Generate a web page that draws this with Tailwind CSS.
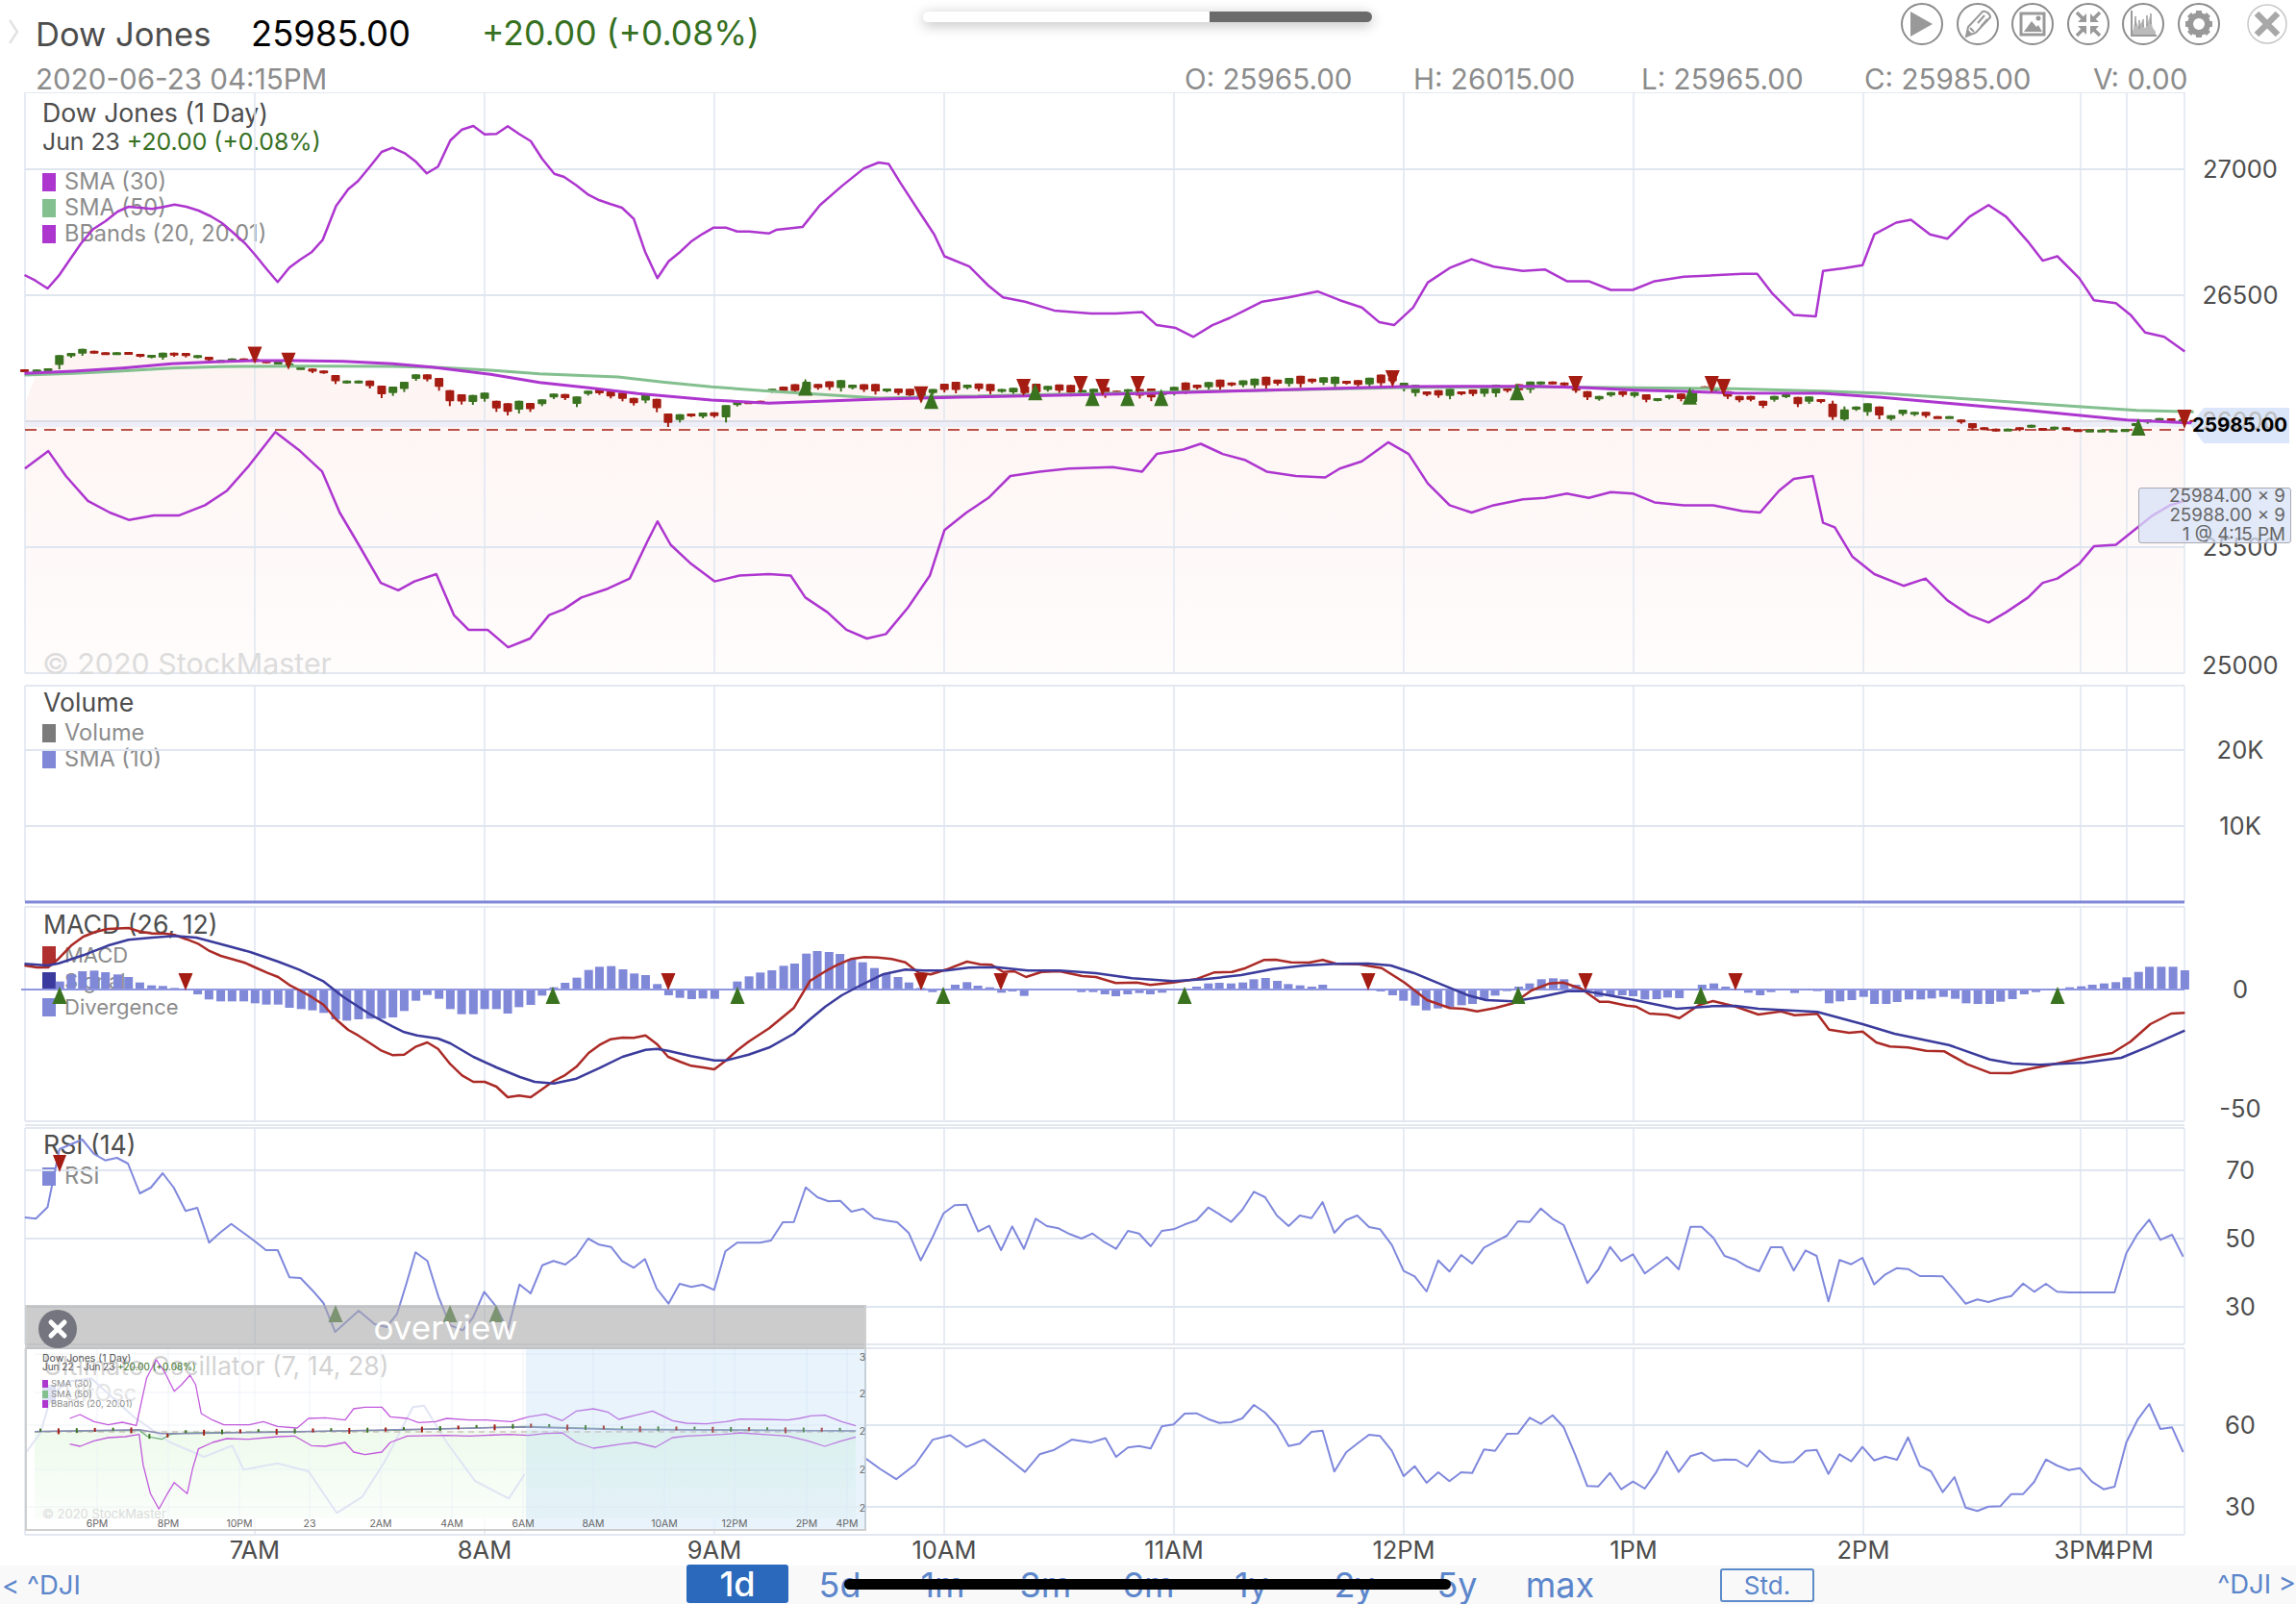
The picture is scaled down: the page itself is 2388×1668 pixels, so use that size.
<!DOCTYPE html>
<html lang="en">

<head>
  <meta charset="UTF-8">
  <title>Dow Jones chart</title>
  <script src="https://cdn.jsdelivr.net/npm/@tailwindcss/browser@4"></script>
</head>

<body class="relative w-[2388px] h-[1668px] overflow-hidden bg-white [font-family:Inter,sans-serif]">
  <!-- header -->
  <div class="flex h-[64px] items-start">
    <svg class="mt-[20px] ml-[9px] mr-[17px]" width="11" height="26" viewBox="0 0 11 26"><path d="M1 1 L9 13 L1 25" fill="none" stroke="#e2e2e2" stroke-width="2.5"/></svg>
    <span class="mt-[15px] w-[224px] text-[34.6px] leading-[40px] text-[#4d4d4d]">Dow Jones</span>
    <span class="mt-[15px] w-[240px] text-[36.4px] leading-[40px] text-black">25985.00</span>
    <span class="mt-[15px] text-[35.5px] leading-[40px] text-[#36701f]">+20.00 (+0.08%)</span>

    <div class="ml-auto mt-[3px] mr-[9px] flex items-center">
      <div class="flex gap-[13.6px]">
        <svg width="44" height="44" viewBox="0 0 44 44"><circle cx="22" cy="22" r="21" fill="#fff" stroke="#8c8c8c" stroke-width="2"/><path d="M10 9 L33 22 L10 35 Z" fill="#999"/></svg>
        <svg width="44" height="44" viewBox="0 0 44 44"><circle cx="22" cy="22" r="21" fill="#fff" stroke="#8c8c8c" stroke-width="2"/><path d="M10 35 L12 25 L27 9 C30 8 35 11 35 15 L20 31 Z M14 26 L18 30 M22 21 L29 13 M25 25 L32 17" fill="none" stroke="#999" stroke-width="2"/><path d="M10 35 L12 28 L16 32 Z" fill="#999"/></svg>
        <svg width="44" height="44" viewBox="0 0 44 44"><circle cx="22" cy="22" r="21" fill="#fff" stroke="#8c8c8c" stroke-width="2"/><rect x="10" y="11" width="24" height="22" fill="none" stroke="#999" stroke-width="3"/><path d="M13 30 L21 19 L26 25 L28 23 L32 30 Z" fill="#999"/><circle cx="28" cy="16" r="2.5" fill="#999"/></svg>
        <svg width="44" height="44" viewBox="0 0 44 44"><circle cx="22" cy="22" r="21" fill="#fff" stroke="#8c8c8c" stroke-width="2"/><path d="M10 10 L18 18 M34 10 L26 18 M10 34 L18 26 M34 34 L26 26" stroke="#999" stroke-width="3.5"/><path d="M20 20 L20 11 L11 20 Z M24 20 L24 11 L33 20 Z M20 24 L20 33 L11 24 Z M24 24 L24 33 L33 24 Z" fill="#999"/></svg>
        <svg width="44" height="44" viewBox="0 0 44 44"><circle cx="22" cy="22" r="21" fill="#fff" stroke="#8c8c8c" stroke-width="2"/><path d="M10 8 L10 34 L36 34" fill="none" stroke="#999" stroke-width="2"/><path d="M11 30 L14 17 L17 25 L21 19 L24 27 L29 14 L32 26 L35 30 L35 33 L11 33 Z" fill="#bbb"/><path d="M14 14 L14 24 M18 18 L18 27 M22 17 L22 25 M26 13 L26 24 M30 11 L30 22" stroke="#999" stroke-width="1.5"/></svg>
        <svg width="44" height="44" viewBox="0 0 44 44"><circle cx="22" cy="22" r="21" fill="#fff" stroke="#8c8c8c" stroke-width="2"/><circle cx="22" cy="22" r="9" fill="none" stroke="#999" stroke-width="6"/><path d="M19 8 h6 v5 h-6 Z M19 31 h6 v5 h-6 Z M8 19 h5 v6 h-5 Z M31 19 h5 v6 h-5 Z M10 14 l4 -4 l4 4 l-4 4 Z M26 14 l4 -4 l4 4 l-4 4 Z M10 30 l4 -4 l4 4 l-4 4 Z M26 30 l4 -4 l4 4 l-4 4 Z" fill="#999"/></svg>
      </div>
      <svg class="ml-[28px]" width="42" height="42" viewBox="0 0 42 42"><circle cx="21" cy="21" r="20" fill="#fff" stroke="#c8c8c8" stroke-width="1.5"/><path d="M10 10 L32 32 M32 10 L10 32" stroke="#a8a8a8" stroke-width="6.5"/></svg>
    </div>
  </div>
  <div class="flex h-[32px] items-center text-[29.6px] text-[#8c8c8c] pt-[4px]">
    <span class="ml-[37px] w-[1195px] text-[#8c8c8c]">2020-06-23 04:15PM</span>
    <span class="w-[238px]">O: 25965.00</span>
    <span class="w-[237px]">H: 26015.00</span>
    <span class="w-[232px]">L: 25965.00</span>
    <span class="w-[238px]">C: 25985.00</span>
    <span>V: 0.00</span>
  </div>

  <!-- floating page indicator -->
  <div class="absolute left-[960px] top-[12px] flex h-[11px] w-[467px] overflow-hidden rounded-full shadow-[0_3px_14px_rgba(0,0,0,0.28)]">
    <div class="w-[298px] bg-white"></div>
    <div class="flex-1 bg-[#6b6b6b]"></div>
  </div>

  <!-- chart -->
  <div class="relative h-[1532px] w-full">
    <div class="absolute left-[44px] top-[6px] text-[26.7px] leading-[30px] text-[#4d4d4d]">
      <div>Dow Jones (1 Day)</div>
      <div class="text-[24.8px]">Jun 23 <span class="text-[#36701f]">+20.00 (+0.08%)</span></div>
    </div>
    <div class="absolute left-[44px] top-[82px] flex flex-col gap-[5px] text-[23.6px] leading-[22px] text-[#8c8c8c]">
      <div class="flex items-center gap-[9px]"><i class="h-[19px] w-[14px] bg-[#ad36cf]"></i>SMA (30)</div>
      <div class="flex items-center gap-[9px]"><i class="h-[19px] w-[14px] bg-[#83bf8f]"></i>SMA (50)</div>
      <div class="flex items-center gap-[9px]"><i class="h-[19px] w-[14px] bg-[#ad36cf]"></i>BBands (20, 20.01)</div>
    </div>
    <div class="absolute left-[44px] top-[619px] text-[26.7px] leading-[30px] text-[#4d4d4d]">
      <div class="pl-[1px]">Volume</div>
      <div class="mt-[6px] flex flex-col gap-[5px] text-[23.6px] leading-[22px] text-[#8c8c8c]">
        <div class="flex items-center gap-[9px]"><i class="h-[19px] w-[14px] bg-[#7b7b7b]"></i>Volume</div>
        <div class="flex items-center gap-[9px]"><i class="h-[19px] w-[14px] bg-[#8088d8]"></i>SMA (10)</div>
      </div>
    </div>
    <div class="absolute left-[44px] top-[850px] text-[26.7px] leading-[30px] text-[#4d4d4d]">
      <div class="pl-[1px]">MACD (26, 12)</div>
      <div class="mt-[6px] flex flex-col gap-[5px] text-[22px] leading-[22px] text-[#8c8c8c]">
        <div class="flex items-center gap-[9px]"><i class="h-[19px] w-[14px] bg-[#b03030]"></i>MACD</div>
        <div class="flex items-center gap-[9px]"><i class="h-[19px] w-[14px] bg-[#3b3b9f]"></i>Signal</div>
        <div class="flex items-center gap-[9px]"><i class="h-[19px] w-[14px] bg-[#8088d8]"></i>Divergence</div>
      </div>
    </div>
    <div class="absolute left-[44px] top-[1079px] text-[26.7px] leading-[30px] text-[#4d4d4d]">
      <div class="pl-[1px]">RSI (14)</div>
      <div class="mt-[7px] flex items-center gap-[9px] text-[23.6px] leading-[22px] text-[#8c8c8c]"><i class="h-[19px] w-[14px] bg-[#8088d8]"></i>RSI</div>
    </div>
    <div class="absolute left-[44px] top-[1309px] text-[26.7px] leading-[30px] text-[#4d4d4d]">
      <div class="pl-[1px]">Ultimate Oscillator (7, 14, 28)</div>
      <div class="mt-[3px] flex items-center gap-[9px] text-[23.6px] leading-[22px] text-[#8c8c8c]"><i class="h-[19px] w-[14px] bg-[#8088d8]"></i>UltOsc</div>
    </div>

    <svg id="chart" class="absolute inset-0" width="2388" height="1532" viewBox="0 96 2388 1532"></svg>

    <div class="absolute left-[44px] top-[576px] text-[30.4px] leading-[36px] text-[#dcdcdc]">© 2020 StockMaster</div>

    <!-- last trade box -->
    <div class="absolute left-[2224px] top-[411px] flex h-[58px] w-[159px] flex-col items-end justify-center rounded-[3px] border border-[#a9a9b2] bg-[#d8e2f7]/75 pr-[5px] text-[18.8px] leading-[20px] text-[#666]">
      <div>25984.00 × 9</div>
      <div>25988.00 × 9</div>
      <div>1 @ 4:15 PM</div>
    </div>

    <!-- overview -->
    <div class="absolute left-[26px] top-[1261px] h-[235px] w-[875px] border-x-2 border-b-2 border-[#cfcfcf]">
      <div class="relative flex h-[46px] items-center justify-center bg-[#aaaaaa]/60 text-[35px] text-white">
        <svg class="absolute left-[12px] top-[5px]" width="40" height="40" viewBox="0 0 40 40"><circle cx="20" cy="20" r="20" fill="#75757f"/><path d="M13 13 L27 27 M27 13 L13 27" stroke="#fff" stroke-width="5" stroke-linecap="round"/></svg>
        <span>overview</span>
      </div>
      <div class="relative h-[187px] bg-white/75">
        <svg id="mini" class="absolute inset-0" width="873" height="187" viewBox="27 1403 873 187"></svg>
        <div class="absolute left-[16px] top-[5px] text-[10.5px] leading-[9px] text-[#555]">
          <div>Dow Jones (1 Day)</div>
          <div class="text-[10px]">Jun 22 - Jun 23 <span class="text-[#36701f]">+20.00 (+0.08%)</span></div>
          <div class="mt-[8px] flex flex-col gap-[0.5px] text-[9.5px] leading-[10px] text-[#8c8c8c]">
            <div class="flex items-center gap-[3px]"><i class="h-[8px] w-[6px] bg-[#ad36cf]"></i>SMA (30)</div>
            <div class="flex items-center gap-[3px]"><i class="h-[8px] w-[6px] bg-[#83bf8f]"></i>SMA (50)</div>
            <div class="flex items-center gap-[3px]"><i class="h-[8px] w-[6px] bg-[#ad36cf]"></i>BBands (20, 20.01)</div>
          </div>
        </div>
        <div class="absolute left-[16px] top-[163px] text-[13px] leading-[16px] text-[#dcdcdc]">© 2020 StockMaster</div>
      </div>
    </div>
  </div>

  <!-- range bar -->
  <div class="flex h-[40px] items-center bg-[#f9f9f9] text-[36px] text-[#5c86cb]">
    <span class="w-[714px] pl-[2px] text-[27.5px] leading-[40px]">&lt; ^DJI</span>
    <span class="-mt-[2px] flex h-[40px] w-[106px] items-center justify-center rounded-[3px] bg-[#2b69bc] font-medium text-white">1d</span>
    <span class="w-[107px] text-center">5d</span>
    <span class="w-[107px] text-center">1m</span>
    <span class="w-[107px] text-center">3m</span>
    <span class="w-[107px] text-center">6m</span>
    <span class="w-[107px] text-center">1y</span>
    <span class="w-[107px] text-center">2y</span>
    <span class="w-[107px] text-center">5y</span>
    <span class="w-[107px] text-center">max</span>
    <span class="ml-[113px] flex h-[35px] w-[98px] items-center justify-center rounded-[3px] border-2 border-[#5c8bc9] text-[26px]">Std.</span>
    <span class="ml-auto text-[27.5px]">^DJI &gt;</span>
  </div>

  <!-- home indicator -->
  <div class="absolute left-[878px] top-[1642px] h-[11px] w-[631px] rounded-full bg-black"></div>

  <script>
    const L = 26, R = 2272;
    const GRID = "#dfe6f0", PURPLE = "#ad36cf", GREEN = "#83bf8f", BLUE = "#7f88dc", DRED = "#a51c12", DGREEN = "#3a7320";

    // traced from the screenshot: flat x,y lists, each with its own crop origin + scale
    const pts = (a, ox = 0, oy = 0, sx = 1, sy = 1) => {
      let out = [];
      for (let i = 0; i < a.length; i += 2) out.push([ox + a[i] / sx, oy + a[i + 1] / sy]);
      return out;
    };
    const S = 2388 / 1568;
    const line = (p, color, w = 2.5, extra = "") =>
      `<polyline points="${p.map(q => q[0].toFixed(1) + "," + q[1].toFixed(1)).join(" ")}" fill="none" stroke="${color}" stroke-width="${w}" stroke-linejoin="round" ${extra}/>`;
    const hl = (y, c = GRID, w = 2, x1 = L, x2 = R) => `<line x1="${x1}" x2="${x2}" y1="${y}" y2="${y}" stroke="${c}" stroke-width="${w}"/>`;
    const vl = (x, y1, y2, c = GRID, w = 1.5) => `<line x1="${x}" x2="${x}" y1="${y1}" y2="${y2}" stroke="${c}" stroke-width="${w}"/>`;
    const down = (x, y, w = 15, h = 18) => `<path d="M${x - w / 2} ${y} h${w} l-${w / 2} ${h} Z" fill="${DRED}"/>`;
    const up = (x, y, w = 15, h = 18) => `<path d="M${x - w / 2} ${y} h${w} l-${w / 2} -${h} Z" fill="${DGREEN}"/>`;
    const label = (x, y, t, anchor = "middle") => `<text x="${x}" y="${y}" dy="0.36em" text-anchor="${anchor}" font-size="25.5" fill="#4d4d4d">${t}</text>`;

    const panels = [[96, 700], [713, 938], [943, 1166], [1173, 1398], [1402, 1596]];
    const hours = [265, 504, 743, 982, 1221, 1460, 1699, 1938, 2164, 2212];
    const hourNames = ["7AM", "8AM", "9AM", "10AM", "11AM", "12PM", "1PM", "2PM", "3PM", "4PM"];

    // ---- main panel
    const upper = pts([50,858,72,875,97,900,120,860,140,815,165,760,190,715,215,690,240,660,262,645,285,648,310,652,335,645,356,638,380,645,405,657,430,675,452,695,475,725,500,760,520,795,545,842,566,880,590,835,612,810,635,787,658,748,685,643,710,590,730,565,755,518,778,474,800,461,825,478,848,505,870,541,893,520,918,438,942,404,965,393,988,419,1012,418,1035,394,1058,418,1082,440,1105,495,1130,542,1150,552,1175,578,1200,608,1222,625,1245,637,1268,648,1292,683,1315,785,1340,868,1363,815,1387,785,1410,752,1432,730,1455,710,1480,710,1503,722,1527,722,1568,728], 0, 0, 1.96, 3)
      .concat(pts([530,157,548,155,560,140,575,127,590,115,600,111,607,112,615,125,628,145,638,160,645,175,662,182,675,195,685,203,700,206,720,212,745,214,762,214,780,213,790,222,803,224,815,230,828,222,840,217,850,212,862,206,880,203,900,199,915,205,930,210,942,220,952,222,965,210,975,193,990,183,1005,177,1020,182,1040,185,1055,184,1070,192,1085,192,1100,198,1115,198,1130,192,1150,189,1170,188,1190,187,1200,187,1210,200,1225,215,1240,216,1245,185,1260,183,1272,181,1280,160,1295,152,1305,150,1318,160,1330,163,1345,148,1358,140,1370,148,1385,165,1395,178,1405,175,1420,190,1430,205,1445,207,1455,215,1465,227,1478,230,1492,240], 0, 0, 1 / S, 1 / S));
    const lower = pts([17,320,33,308,45,325,60,342,75,350,88,355,105,352,122,352,140,345,155,335,170,318,188,295,205,308,220,322,232,350,245,372,260,398,272,403,283,397,298,392,310,420,320,430,333,430,347,442,362,436,375,420,385,416,397,408,415,402,430,395,442,370,449,356,458,372,472,385,488,397,505,393,525,392,540,393,550,408,565,418,578,430,592,436,605,433,620,415,635,393,645,362,660,350,675,340,690,325,710,322,730,320,760,319,780,322,790,310,808,307,820,303,835,310,850,314,865,322,885,325,905,326,915,320,930,315,948,302,962,310,975,330,990,345,1005,350,1020,345,1040,341,1055,340,1070,337,1085,340,1100,336,1115,337,1130,343,1150,345,1170,345,1190,349,1202,350,1215,335,1225,327,1238,325,1245,357,1253,360,1265,380,1280,392,1300,400,1315,395,1330,410,1345,420,1358,425,1370,418,1385,408,1395,398,1405,395,1420,385,1430,373,1445,372,1460,360,1470,352,1482,345,1492,342], 0, 0, 1 / S, 1 / S);

    const smaP = pts([50,205,150,198,250,188,350,175,450,168,520,165,600,165,700,167,800,175,880,185,1000,208,1100,233,1200,250,1300,268,1450,288,1568,298], 0, 320, 1.96, 3)
      .concat([[914, 415], [1000, 413], [1200, 409], [1460, 402]], pts([0,125,100,130,200,137,300,141,400,146,580,147,700,160,850,180,1000,200,1200,230,1336,240], 1600, 360, 1.96, 3));
    const smaG = pts([50,210,150,205,250,197,350,188,450,184,520,183,640,182,800,183,900,187,1000,195,1100,206,1260,216,1350,232,1450,247,1568,260], 0, 320, 1.96, 3)
      .concat([[914, 414], [1000, 412], [1200, 408], [1460, 403]], pts([0,127,200,130,400,133,580,140,700,147,900,167,1100,188,1220,200,1336,205], 1600, 360, 1.96, 3));

    // candles: x, high, low, green?
    let candles = [];
    const left = [50,192,198,0,75,193,200,1,98,189,197,1,121,148,192,1,145,141,156,1,168,128,150,1,192,134,143,0,215,139,146,0,238,139,146,1,262,138,146,0,286,144,155,0,309,147,158,1,332,140,162,1,355,140,153,0,379,141,155,0,403,148,158,1,426,153,168,0,450,163,169,1,473,158,168,1,497,158,166,0,520,160,170,0,543,164,174,0,567,168,176,1,590,174,182,1,613,185,192,1,637,190,204,0,660,196,206,0,684,210,238,0,707,227,237,1,731,227,236,1,754,227,252,0,778,243,282,0,801,246,275,1,824,231,263,1,848,208,228,1,871,208,230,0,895,219,259,0,917,257,307,0,941,270,302,0,964,272,303,1,988,265,293,1,1012,290,325,0,1035,298,336,0,1058,290,330,1,1081,297,325,0,1105,286,307,1,1129,268,285,1,1152,269,288,0,1176,277,310,1,1199,259,274,1,1222,255,272,0,1245,261,283,0,1269,265,292,0,1292,281,305,0,1316,270,298,1,1339,284,326,0,1362,330,372,0,1386,332,358,1,1409,330,341,0,1433,327,345,1,1456,326,343,0,1480,304,358,1,1503,294,308,1,1526,292,298,0,1550,290,297,0];
    for (let i = 0; i < left.length; i += 4) candles.push([left[i] / 1.96, 320 + left[i + 1] / 3, 320 + left[i + 2] / 3, left[i + 3]]);
    const mid = [[525,267],[550,265],[570,263],[590,265],[610,267],[630,270],[645,265],[665,264],[685,267],[700,267],[720,265],[740,268],[770,268],[790,270],[810,265],[830,263],[850,262],[880,261],[900,260],[930,262],[950,259],[960,265],[975,269],[990,269],[1010,268],[1030,266],[1050,264]].map(p => [p[0] * S, p[1] * S]);
    const at = (path, x) => {
      for (let i = 1; i < path.length; i++) if (x <= path[i][0]) {
        const [a, b] = [path[i - 1], path[i]];
        return a[1] + (b[1] - a[1]) * (x - a[0]) / (b[0] - a[0]);
      }
      return path[path.length - 1][1];
    };
    for (let x = 803, i = 0; x < 1600; x += 11.95, i++) {
      const y = at(mid, x), h = 4 + (i * 13) % 10;
      candles.push([x, y - h / 2, y + h / 2, (i * 5) % 7 < 3 ? 1 : 0]);
    }
    const right = [5,110,122,1,29,110,118,0,53,113,123,0,77,125,145,0,100,140,168,0,124,155,170,1,148,143,158,1,172,140,158,0,196,143,160,1,220,150,175,0,243,162,172,1,267,152,166,1,291,148,172,0,315,130,180,1,339,125,133,0,362,130,142,1,386,140,165,0,410,155,175,0,433,155,172,0,458,170,193,0,481,155,173,1,505,150,162,1,529,158,190,0,552,157,180,1,576,165,178,0,600,170,230,0,624,188,233,1,648,188,202,1,671,178,217,1,695,188,228,0,719,215,232,1,743,198,217,1,767,205,218,1,790,205,223,0,814,218,224,0,838,218,224,1,862,229,242,0,885,240,262,0,909,253,262,0,933,257,266,0,957,257,262,1,981,253,265,0,1005,245,255,1,1028,255,262,0,1052,251,260,1,1076,253,262,0,1100,259,264,0,1124,260,264,1,1148,260,264,1,1172,260,264,1,1196,259,264,1,1218,240,248,1,1242,228,242,1,1266,224,232,1,1290,225,235,0,1314,228,235,1,1336,230,245,0];
    for (let i = 0; i < right.length; i += 4) candles.push([1600 + right[i] / 1.96, 360 + right[i + 1] / 3, 360 + right[i + 2] / 3, right[i + 3]]);

    const candleSvg = c => {
      const range = c[2] - c[1], bh = Math.max(3, range * 0.7), col = c[3] ? DGREEN : DRED;
      const bt = range > 14 && c[0] % 2 < 1 ? c[1] + 3 : c[1];
      return `<rect x="${c[0] - 1}" y="${c[1]}" width="2" height="${range}" fill="${col}"/><rect x="${c[0] - 4.5}" y="${bt}" width="9" height="${bh}" rx="1" fill="${col}"/>`;
    };
    const area = [[L, 420]].concat(candles.filter(c => c[0] > L).map(c => [c[0], c[1] + 2]), [[R, 440], [R, 700], [L, 700]]);

    let g = `<defs><linearGradient id="pink" x1="0" y1="0" x2="0" y2="1"><stop offset="0" stop-color="#fdf4f2"/><stop offset="1" stop-color="#fffcfc"/></linearGradient></defs>`;
    g += `<polygon points="${area.map(p => p.join(",")).join(" ")}" fill="url(#pink)"/>`;

    for (const [t, b] of panels) {
      g += hl(t, "#e3e8f0") + hl(b, "#e3e8f0");
      g += vl(L, t, b) + vl(R, t, b);
      hours.forEach(x => g += vl(x, t, b));
    }
    [176, 307, 569].forEach(y => g += hl(y));
    g += hl(438, "#dcdce6") + `<rect x="${L}" y="439" width="${R - L}" height="5" fill="#eeeef9"/>`;
    [780, 859, 1217, 1288, 1359, 1482, 1567].forEach(y => g += hl(y));
    g += hl(938, "#8088d8", 3);
    g += hl(1170, "#e3e8f0");

    g += line(upper, PURPLE) + line(lower, PURPLE);
    g += hl(447, DRED, 1.5).replace("/>", ' stroke-dasharray="12 8"/>');
    candles.forEach(c => g += candleSvg(c));
    g += line(smaG, GREEN, 3) + line(smaP, PURPLE, 3);

    [174,197,629,699,738,753,777,951,1076,1169,1177].forEach((x, i) => g += down(x * S, [242,246,269,264,262,264,262,258,262,262,264][i] * S - 8));
    g += down(2272, 426, 15, 20);
    [550,636,707,746,770,793,1036,1154].forEach((x, i) => g += up(x * S, [265,274,268,272,272,272,268,271][i] * S + 8));
    g += up(2224, 453, 15, 18);

    // ---- macd
    [74,300,98,300,122,272,145,250,168,240,192,238,215,243,240,250,262,258,285,275,309,284,332,286,356,292,379,300,403,312,426,328,450,334,473,334,497,334,520,340,543,344,567,344,590,354,614,358,637,362,660,370,684,390,707,394,731,390,755,388,778,388,801,384,824,364,848,332,871,314,895,326,918,358,941,374,965,374,988,358,1012,358,1035,372,1058,352,1082,345,1105,316,1129,290,1152,276,1176,260,1200,236,1222,226,1246,224,1270,234,1293,247,1316,252,1340,280,1363,315,1386,323,1410,327,1433,325,1457,326,1480,297,1503,272,1527,256,1550,244].forEach((v, i, a) => {
      if (i % 2) return;
      const x = v / 1.96, y = 930 + a[i + 1] / 3;
      g += `<rect x="${x - 4.5}" y="${Math.min(y, 1029)}" width="9" height="${Math.abs(y - 1029)}" fill="#8088d8"/>`;
    });
    [3,207,16,193,28,186,41,155,53,147,66,150,78,156,91,172,103,182,116,200,129,218,142,228,154,245,167,262,180,275,205,252,218,244,230,255,243,260,256,277,268,273,281,287,294,270,306,266,319,265,332,268,344,275,357,275,370,282,382,288,395,282,408,278,420,282,433,277,445,268,458,265,471,258,484,248,496,246,509,248,522,245,534,235,547,231,560,240,572,250,585,254,598,258,610,252,623,265,636,265,648,265,661,265,674,273,687,285,699,302,712,317,724,332,737,326,750,322,763,316,775,312,788,300,800,286,813,272,826,258,838,248,851,235,864,232,876,235,889,252,902,270,914,290,927,287,940,285,952,288,965,298,978,297,990,292,1003,294,1016,265,1028,252,1041,248,1054,258,1067,265,1079,277,1092,285,1104,275,1117,266,1130,278,1142,270,1155,272,1168,310,1180,304,1193,300,1206,290,1218,312,1231,312,1243,306,1256,298,1269,298,1281,295,1294,290,1307,296,1319,310,1332,312,1345,312,1357,305,1370,297,1383,282,1396,275,1408,266,1420,265,1433,260,1446,257,1458,252,1471,248,1484,244,1496,229,1509,212,1521,196,1534,196,1547,196,1560,207].forEach((v, i, a) => {
      if (i % 2) return;
      const x = 800 + v / 1.0595, y = 940 + a[i + 1] / 3;
      g += `<rect x="${x - 4.5}" y="${Math.min(y, 1029)}" width="9" height="${Math.abs(y - 1029)}" fill="#8088d8"/>`;
    });
    g += hl(1029, "#8f96df", 2, 22, R);
    const macd = pts([50,222,75,228,98,228,120,200,145,160,170,132,195,117,220,108,262,105,285,116,310,122,335,122,356,127,380,140,405,155,425,175,450,192,498,213,520,228,545,245,567,258,590,283,612,300,635,320,660,345,685,390,710,423,730,440,755,465,778,488,801,502,824,500,848,475,871,462,893,482,918,530,942,565,965,585,988,585,1012,600,1035,633,1058,628,1082,633,1105,608,1129,582,1150,566,1175,538,1200,495,1222,470,1245,452,1269,447,1292,448,1316,440,1339,467,1362,507,1386,522,1409,535,1433,540,1456,546,1480,518,1503,487,1526,460,1568,418], 0, 930, 1.96, 3)
      .concat(pts([27,325,45,240,62,210,75,190,90,172,105,166,120,167,135,172,150,182,165,215,178,220,195,205,218,180,232,188,245,190,258,212,270,210,283,228,300,212,320,210,345,225,360,228,382,247,405,245,420,253,445,245,470,235,490,214,510,212,525,200,545,175,558,174,575,182,595,183,610,175,625,187,650,188,675,200,700,245,725,300,750,325,765,327,780,335,800,325,820,310,840,270,860,248,875,245,895,265,915,305,925,305,945,317,955,320,970,342,990,346,1003,356,1025,315,1040,303,1065,320,1090,345,1115,335,1130,347,1155,343,1168,392,1190,402,1205,398,1220,432,1235,445,1255,448,1275,458,1295,460,1320,500,1345,527,1368,528,1385,517,1420,497,1450,480,1480,465,1500,430,1522,375,1545,342,1560,340], 800, 940, 1.0595, 3));
    const signal = pts([50,217,98,222,120,215,170,190,220,160,262,142,310,135,356,130,400,135,450,155,510,180,567,210,610,235,660,272,700,320,755,375,800,412,824,430,850,440,893,450,918,465,965,507,1012,540,1060,570,1090,585,1129,590,1175,575,1222,542,1269,507,1316,485,1339,482,1362,488,1409,505,1456,518,1480,518,1526,500,1568,478], 0, 930, 1.96, 3)
      .concat(pts([27,405,45,360,62,320,80,285,100,255,125,220,150,205,170,208,195,208,220,199,250,197,285,208,320,208,360,216,400,232,445,241,480,235,520,222,555,203,590,192,625,187,660,186,685,192,710,215,740,250,770,285,790,300,820,304,850,290,880,272,900,272,950,298,1000,327,1040,319,1065,318,1090,327,1155,337,1205,375,1240,405,1300,440,1345,485,1370,498,1400,502,1450,495,1490,480,1520,445,1560,395], 800, 940, 1.0595, 3));
    g += line(macd, "#ab2a26", 2.5) + line(signal, "#3a3b9c", 2.5);
    [193, 695, 958, 1041, 1423, 1649, 1805].forEach(x => g += down(x, 1012));
    [62, 575, 767, 981, 1232, 1579, 1769, 2140].forEach(x => g += up(x, 1044));

    // ---- rsi + ultimate oscillator
    const rsi = pts([8,288,24,292,41,256,58,75,91,45,108,90,124,110,141,102,157,120,174,213,190,195,207,150,223,195,240,268,257,258,274,367,290,335,306,308,323,335,340,362,356,390,373,390,390,475,406,477,423,515,439,555,456,645,490,579,513,621,530,630,545,590,558,500,572,397,589,424,605,535,622,625,640,640,655,600,671,520,688,565,705,640,722,497,738,525,755,437,771,424,788,435,804,408,821,354,837,373,854,380,870,424,887,445,903,418,920,510,937,557,953,495,970,505,986,498,1003,514,1019,394,1036,367,1052,367,1069,367,1085,360,1102,303,1118,302,1135,194,1152,225,1168,238,1185,236,1201,270,1218,261,1234,290,1251,298,1267,303,1284,337,1301,422,1317,355,1334,275,1350,250,1367,248,1384,332,1400,314,1417,390,1433,316,1450,386,1467,292,1483,315,1500,322,1516,340,1533,354,1549,338,1566,365], 20, 1170, 1.3876, 3)
      .concat(pts([15,386,32,330,48,338,65,378,81,330,98,325,114,310,131,297,148,257,164,278,181,302,197,265,214,208,230,225,247,282,264,315,280,282,297,290,313,240,330,336,347,296,363,282,380,318,396,325,413,374,430,455,446,472,463,519,480,422,496,457,513,405,529,432,546,382,562,364,579,345,595,300,612,302,628,260,645,292,661,312,678,400,695,493,711,450,728,380,744,424,761,403,778,463,794,437,810,412,827,450,844,317,860,317,877,352,893,408,910,421,926,442,943,456,960,381,976,381,993,454,1010,391,1026,408,1043,550,1059,421,1076,434,1092,414,1109,497,1125,466,1142,446,1158,449,1175,471,1191,471,1208,472,1225,515,1241,557,1258,544,1274,552,1291,541,1307,533,1324,494,1340,520,1357,495,1373,520,1390,522,1406,522,1423,522,1440,522,1456,522,1473,400,1489,340,1506,295,1522,358,1539,342,1555,410], 1150, 1170, 1.3876, 3));
    const ult = pts([590,995,601,1003,612,1010,625,1000,637,983,649,980,660,988,672,983,685,993,700,1005,710,993,720,990,732,983,745,985,755,982], 0, 0, 1 / S, 1 / S)
      .concat(pts([15,1035,32,1006,48,1001,65,1009,81,940,98,934,114,900,131,899,148,917,164,929,181,927,197,915,214,873,230,897,247,937,264,1001,280,994,297,957,313,953,330,1081,347,1021,363,994,380,966,396,970,413,1016,430,1095,446,1064,463,1116,480,1083,496,1111,513,1083,529,1085,546,1012,562,1016,579,963,595,962,612,913,628,932,645,905,661,943,678,1030,695,1126,711,1127,728,1085,744,1136,761,1112,778,1134,794,1085,810,1018,827,1082,844,1033,860,1022,877,1047,893,1043,910,1044,926,1065,943,1015,960,1047,976,1053,993,1051,1010,1016,1026,1013,1043,1088,1059,1027,1076,1049,1092,1004,1109,1046,1125,1034,1142,1044,1158,974,1175,1063,1191,1080,1208,1145,1225,1098,1241,1193,1258,1204,1274,1190,1291,1189,1307,1151,1324,1151,1340,1113,1357,1043,1373,1062,1390,1076,1406,1070,1423,1112,1440,1136,1456,1128,1473,990,1489,920,1506,870,1522,948,1539,943,1555,1020], 1150, 1170, 1.3876, 3));
    g += line(rsi, BLUE, 2) + line(ult, BLUE, 2);
    g += down(62, 1201, 14, 18);
    [349, 468, 516].forEach(x => g += up(x, 1375));

    // ---- axis labels
    [[176,"27000"],[307,"26500"],[569,"25500"],[692,"25000"],[780,"20K"],[859,"10K"],[1029,"0"],[1153,"-50"],[1217,"70"],[1288,"50"],[1359,"30"],[1482,"60"],[1567,"30"]]
      .forEach(([y, t]) => g += label(2330, y, t));
    hours.forEach((x, i) => g += label(x, 1612, hourNames[i]));
    g += `<polygon points="2278,442 2292,424 2381,424 2381,461 2292,461" fill="#dbe6fa"/>`;
    g += `<text x="2330" y="438" dy="0.36em" text-anchor="middle" font-size="25.5" fill="#bbb">26000</text>`;
    g += `<text x="2280" y="442" dy="0.36em" font-size="20.5" font-weight="700" fill="#000">25985.00</text>`;
    document.getElementById("chart").innerHTML = g;

    // ---- overview mini chart (traced in a 1.704 x 3 crop with origin 0,1340)
    const z = a => pts(a, 0, 1340, 1.704, 3);
    let m = "";
    m += `<defs><linearGradient id="mg" x1="0" y1="0" x2="0" y2="1"><stop offset="0" stop-color="#eefbec"/><stop offset="1" stop-color="#fafefa"/></linearGradient></defs>`;
    m += `<rect x="35" y="1488" width="854" height="91" fill="url(#mg)"/>`;
    [100,174,248,321,395,469,543,616,690,763,838,880].forEach(x => m += vl(x, 1403, 1579, "#eef2f7", 1));
    [1408, 1448, 1488, 1528, 1567].forEach(y => m += hl(y, "#eef2f7", 1, 35, 890));
    m += line(z([45,510,70,450,90,330,120,290,160,280,235,400,300,480,360,525,410,490,430,565,490,545,545,570,595,700,640,650,680,540,730,370,750,365,790,480,840,600,900,655,928,580]), "#e0e4f4", 2);
    m += line(z([122,405,140,393,165,415,190,425,215,417,240,427,258,280,275,222,290,260,307,320,320,300,335,270,345,300,355,390,375,410,395,425,440,425,465,415,490,430,525,435,545,405,575,403,610,410,625,375,645,370,675,370,690,400,720,405,740,418,770,415,790,405,830,410,860,410,905,415,935,400,965,392,995,412,1020,382,1050,375,1075,385,1095,408,1125,395,1155,382,1190,412,1215,420,1250,422,1285,415,1310,407,1350,408,1395,410,1415,405,1435,397,1460,395,1490,415,1515,428]), "#c25bdc", 1.3);
    m += line(z([122,485,140,492,165,475,190,465,220,462,245,455,252,550,265,640,280,688,295,640,307,605,330,640,340,560,350,500,375,480,400,468,440,470,490,462,520,460,550,490,575,492,610,480,625,510,645,518,675,510,690,480,720,460,790,458,830,460,900,455,935,458,965,452,995,450,1020,480,1050,498,1100,485,1125,480,1160,495,1190,465,1215,460,1280,455,1310,450,1350,455,1395,460,1430,475,1460,492,1490,475,1515,463]), "#c25bdc", 1.3);
    m += hl(1489, "#cfc4b8", 1.5, 35, 890).replace("/>", ' stroke-dasharray="6 5"/>');
    m += line(z([60,446,245,442,260,462,285,470,300,455,330,450,700,442,930,430,1100,438,1515,444]), "#6aa97a", 1.2);
    m += line(z([60,446,245,440,285,452,330,452,500,448,700,440,930,432,1100,440,1515,444]), "#8a8ab5", 1.5);
    for (let x = 40, i = 0; x < 888; x += 6.3, i++) {
      if (i % 3 === 0) {
        const y = at(z([60,446,245,442,260,462,285,470,300,455,330,450,700,442,930,430,1100,438,1515,444]), x);
        m += `<rect x="${x}" y="${y - 3}" width="2" height="${3 + i % 4}" fill="${i % 2 ? DRED : DGREEN}"/>`;
      }
    }
    m += `<rect x="546" y="1403" width="354" height="187" fill="#a9d2f5" opacity="0.27"/>`;
    [[100,"6PM"],[174,"8PM"],[248,"10PM"],[321,"23"],[395,"2AM"],[469,"4AM"],[543,"6AM"],[616,"8AM"],[690,"10AM"],[763,"12PM"],[838,"2PM"],[880,"4PM"]]
      .forEach(([x, t]) => m += `<text x="${x}" y="1584" dy="0.36em" text-anchor="middle" font-size="10.5" fill="#666">${t}</text>`);
    [[1411,"3"],[1449,"2"],[1488,"2"],[1528,"2"],[1568,"2"]].forEach(([y, t]) => m += `<text x="896" y="${y}" dy="0.36em" text-anchor="middle" font-size="10.5" fill="#666">${t}</text>`);
    document.getElementById("mini").innerHTML = m;
  </script>
</body>

</html>
